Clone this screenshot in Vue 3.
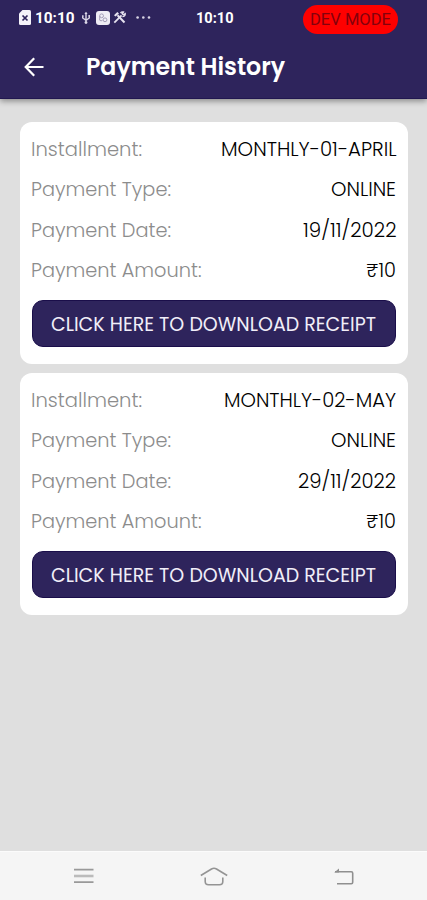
<script setup>
import { h } from 'vue'

// A line of text set to an exact advance width, so every label keeps its measure.
const FitText = (props) =>
  h('svg', { class: 'fit', width: props.w, height: props.size * 1.5 }, [
    h('text', {
      x: 0,
      y: props.size * 1.1,
      'font-size': props.size,
      textLength: props.w,
      lengthAdjust: 'spacingAndGlyphs',
    }, props.text),
  ])
FitText.props = ['text', 'w', 'size']

const payments = [
  [
    { label: 'Installment:', lw: 111, value: 'MONTHLY-01-APRIL', vw: 175.5 },
    { label: 'Payment Type:', lw: 140, value: 'ONLINE', vw: 65 },
    { label: 'Payment Date:', lw: 140, value: '19/11/2022', vw: 93.5 },
    { label: 'Payment Amount:', lw: 170.5, value: '₹10', vw: 30 },
  ],
  [
    { label: 'Installment:', lw: 111, value: 'MONTHLY-02-MAY', vw: 172 },
    { label: 'Payment Type:', lw: 140, value: 'ONLINE', vw: 65 },
    { label: 'Payment Date:', lw: 140, value: '29/11/2022', vw: 98 },
    { label: 'Payment Amount:', lw: 170.5, value: '₹10', vw: 30 },
  ],
]
</script>

<template>
  <div class="screen">
    <header class="header">
      <div class="status">
        <div class="status-left">
          <svg class="sim" width="12" height="15" viewBox="0 0 12 15">
            <path d="M3.5 0H10.5Q12 0 12 1.5V13.5Q12 15 10.5 15H1.5Q0 15 0 13.5V3.5Z" fill="#f5f3fa" />
            <path d="M3.5 5.5L8.5 10.5M8.5 5.5L3.5 10.5" stroke="#2e245c" stroke-width="1.7" />
          </svg>
          <FitText class="clock" text="10:10" :w="39.5" :size="15.5" />
          <svg class="usb" width="10" height="14" viewBox="0 0 10 15" fill="none" stroke="#dcd8e8" stroke-width="1.5">
            <path d="M5 2V12M1.5 5.5V7.5L5 10L8.5 7.5V5" />
            <path d="M3.3 3.2L5 .8L6.7 3.2ZM.8 4.6H2.4V6.2H.8ZM7.6 4.2H9.2V5.8H7.6Z" fill="#dcd8e8" stroke="none" />
            <circle cx="5" cy="12.4" r="1.5" fill="#dcd8e8" stroke="none" />
          </svg>
          <svg class="app" width="14" height="14" viewBox="0 0 14 14">
            <rect width="14" height="14" rx="3" fill="#eeecf4" />
            <g fill="none" stroke="#a49fb8" stroke-width="1">
              <circle cx="5.6" cy="4.8" r="1.9" />
              <path d="M3.7 5V9.2Q5 10.4 6.4 9.4" />
              <circle cx="9" cy="8.8" r="1.9" />
            </g>
          </svg>
          <svg class="tools" width="13" height="13" viewBox="0 0 13 13" fill="none" stroke="#e6e3ef">
            <path d="M1.3 11.7L8.6 4.4" stroke-width="1.8" />
            <path d="M7.5 2Q8.8 .4 10.5 1L9.2 2.8L10.3 3.9L12.2 2.7Q12.4 5.6 9.4 5.6" stroke-width="1.4" />
            <path d="M1 4.3L4.3 1L6 2.5L2.6 5.6Z" fill="#e6e3ef" stroke="none" />
            <path d="M4.5 4.2L11.5 11.5" stroke-width="2" />
          </svg>
          <svg class="dots" width="15" height="3" viewBox="0 0 15 3" fill="#d8d4e4">
            <circle cx="1.6" cy="1.5" r="1.3" /><circle cx="7.3" cy="1.5" r="1.3" /><circle cx="13" cy="1.5" r="1.3" />
          </svg>
        </div>
        <FitText class="clock mid" text="10:10" :w="37.5" :size="14.5" />
        <div class="badge"><FitText text="DEV MODE" :w="81" :size="16" /></div>
      </div>
      <div class="bar">
        <svg class="back" width="20" height="20" viewBox="0 0 20 20" fill="none" stroke="#fff" stroke-width="2.2">
          <path d="M10.2 1.2L1.7 10L10.2 18.8M1.5 10H19.5" />
        </svg>
        <FitText class="title" text="Payment History" :w="199" :size="24" />
      </div>
    </header>

    <main class="list">
      <section v-for="(rows, i) in payments" :key="i" class="card">
        <div v-for="row in rows" :key="row.label" class="row">
          <FitText class="label" :text="row.label" :w="row.lw" :size="19.3" />
          <FitText class="value" :text="row.value" :w="row.vw" :size="19.3" />
        </div>
        <button class="download">
          <FitText text="CLICK HERE TO DOWNLOAD RECEIPT" :w="325" :size="19.3" />
        </button>
      </section>
    </main>

    <nav class="nav">
      <svg width="20" height="16" viewBox="0 0 20 16" stroke-width="1.7">
        <path d="M0 1.6H19.5M0 14.2H19.5" stroke="#999" />
        <path d="M0 8H19.5" stroke="#bbb" stroke-width="2.6" />
      </svg>
      <svg width="28" height="19" viewBox="0 0 28 19" fill="none" stroke="#949494" stroke-width="1.6">
        <path d="M.8 8.5L11.5 2Q14 .6 16.5 2L27.2 8.5" />
        <path d="M5.2 10.5V14.5Q5.2 17.8 8.5 17.8H19.5Q22.8 17.8 22.8 14.5V10.5" />
      </svg>
      <svg width="20" height="17" viewBox="0 0 20 17" fill="none" stroke="#8f8f8f" stroke-width="1.6">
        <path d="M1 3.8H17.3Q18.7 3.8 18.7 5.2V14.3Q18.7 15.7 17.3 15.7H3" />
        <path d="M.2 4.4L5 .4V4.4Z" fill="#8f8f8f" stroke="none" />
      </svg>
    </nav>
  </div>
</template>

<style>
body {
  margin: 0;
}
</style>

<style scoped>
.screen {
  display: flex;
  flex-direction: column;
  width: 427px;
  height: 900px;
  overflow: hidden;
  background: #dfdfdf;
  font-family: Poppins, Inter, sans-serif;
}
.fit {
  display: block;
  flex: none;
  overflow: visible;
  fill: currentColor;
}
.header {
  flex: none;
  height: 99px;
  box-sizing: border-box;
  background: #2e245c;
  border-bottom: 1px solid #211750;
  color: #fff;
  box-shadow: 0 2px 6px rgba(0, 0, 0, 0.4);
}
.status {
  display: grid;
  grid-template-columns: 196px 107px 95px;
  align-items: center;
  height: 35px;
}
.status-left {
  display: flex;
  align-items: center;
  padding-left: 19px;
}
.clock {
  font-family: Roboto, sans-serif;
  font-weight: 700;
}
.status-left .clock {
  margin-left: 4px;
}
.usb {
  margin-left: 6px;
}
.app {
  margin-left: 5px;
}
.tools {
  margin-left: 3.5px;
}
.dots {
  margin-left: 9.5px;
}
.badge {
  display: flex;
  align-items: center;
  justify-content: center;
  height: 29px;
  margin-top: 4px;
  padding-bottom: 1px;
  box-sizing: border-box;
  border-radius: 15px;
  background: #fe0000;
  color: #84000c;
  font-family: Roboto, sans-serif;
}
.bar {
  display: flex;
  align-items: center;
  height: 64px;
  padding-left: 24px;
}
.title {
  margin-left: 42px;
  font-weight: 600;
}
.list {
  display: flex;
  flex: 1;
  flex-direction: column;
  gap: 9px;
  padding: 23px 18.7px 0 19.6px;
}
.card {
  height: 242px;
  box-sizing: border-box;
  padding: 7.3px 12px 0;
  border-radius: 12px;
  background: #fff;
}
.row {
  display: flex;
  align-items: center;
  justify-content: space-between;
  height: 40.3px;
}
.label {
  margin-left: -1px;
  color: #8c8c8c;
  font-weight: 300;
}
.value {
  margin-right: 0.2px;
  color: #000;
  font-weight: 300;
}
.download {
  display: flex;
  align-items: center;
  justify-content: center;
  width: 100%;
  height: 46.5px;
  margin-top: 10px;
  padding: 1.5px 0 0;
  border: 1px solid #1a0e4a;
  border-radius: 11px;
  background: #2e245c;
  color: #f1eef8;
  font-family: inherit;
  font-weight: 400;
}
.nav {
  display: flex;
  flex: none;
  align-items: center;
  justify-content: space-between;
  height: 49px;
  box-sizing: border-box;
  padding: 0 73px 0 74px;
  border-top: 1px solid #fbfbfb;
  background: #f5f5f5;
}
</style>
